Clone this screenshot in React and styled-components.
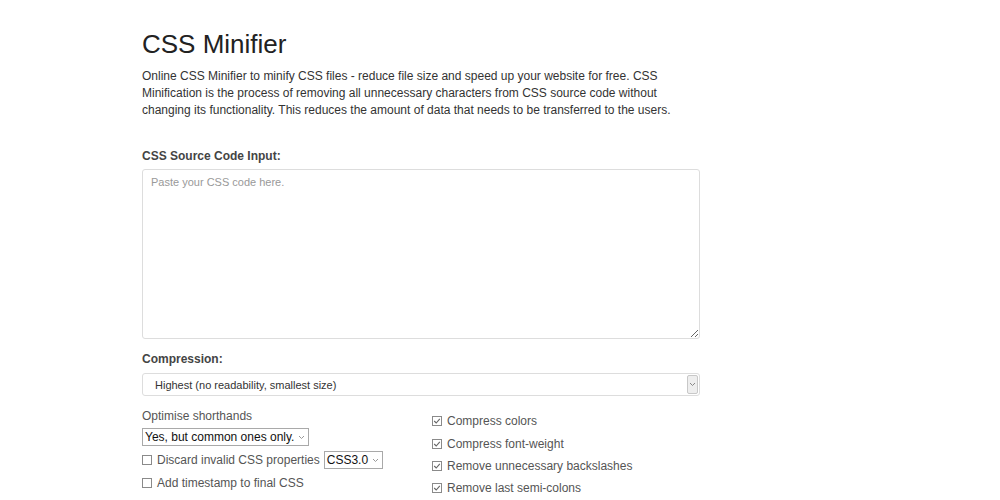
import React from "react";
import styled, { createGlobalStyle } from "styled-components";

const GlobalStyle = createGlobalStyle`
    body {
        margin: 0;
        background-color: #ffffff;
        font-family: "Liberation Sans", Arial, sans-serif;
        color: #333333;
    }
`;

const Page = styled.div`
    width: 558px;
    padding: 28px 0 0 142px;
`;

const Title = styled.h1`
    font-size: 26px;
    font-weight: 400;
    line-height: 32px;
    margin: 0 0 8px 0;
    color: #222222;
`;

const Intro = styled.p`
    width: 540px;
    font-size: 12px;
    line-height: 17px;
    margin: 0 0 29px 0;
    color: #333333;
`;

const FieldLabel = styled.label`
    display: block;
    font-size: 12px;
    font-weight: 700;
    line-height: 17px;
    color: #444444;
    margin-bottom: ${props => props.$gap ?? 4}px;
`;

const CodeArea = styled.textarea`
    display: block;
    box-sizing: border-box;
    width: 558px;
    height: 170px;
    margin: 0 0 12px 0;
    padding: 6px 8px;
    border: 1px solid #dddddd;
    border-radius: 3px;
    font-family: "Liberation Sans", Arial, sans-serif;
    font-size: 11px;
    color: #333333;
    resize: vertical;
    &::placeholder {
        color: #999999;
    }
    &:focus {
        outline: none;
    }
`;

const WideSelect = styled.div`
    box-sizing: border-box;
    width: 558px;
    height: 23px;
    display: flex;
    align-items: center;
    justify-content: space-between;
    padding: 0 1px 0 12px;
    border: 1px solid #dddddd;
    border-radius: 3px;
    font-size: 11px;
    color: #333333;
    margin-bottom: 12px;
`;

const ArrowBox = styled.span`
    width: 11px;
    height: 19px;
    display: flex;
    align-items: center;
    justify-content: center;
    background-color: #eeeeee;
    border: 1px solid #c8c8c8;
    border-radius: 2px;
    box-sizing: border-box;
`;

const Options = styled.div`
    display: grid;
    grid-template-columns: 290px 1fr;
`;

const Column = styled.div`
    display: flex;
    flex-direction: column;
    padding-top: ${props => props.$top || 0}px;
`;

const PlainLabel = styled.div`
    font-size: 12px;
    line-height: 17px;
    color: #555555;
    margin-bottom: 3px;
`;

const SmallSelect = styled.span`
    box-sizing: border-box;
    display: inline-flex;
    align-items: center;
    justify-content: space-between;
    gap: 4px;
    height: 18px;
    padding: 0 3px 0 2px;
    border: 1px solid #a9a9a9;
    font-size: 12px;
    color: #111111;
    white-space: nowrap;
    flex-shrink: 0;
    align-self: ${props => props.$inline ? "auto" : "flex-start"};
    margin-bottom: ${props => props.$inline ? 0 : 3}px;
`;

const Row = styled.div`
    display: flex;
    align-items: center;
    gap: 4px;
    height: 22.4px;
    font-size: 12px;
    color: #555555;
    white-space: nowrap;
`;

const Box = styled.span`
    box-sizing: border-box;
    width: 10px;
    height: 10px;
    margin-right: 1px;
    border: 1px solid #8a8a8a;
    display: inline-flex;
    align-items: center;
    justify-content: center;
    flex-shrink: 0;
`;

const Chevron = ({ color = "#999" }) => (
    <svg width="7" height="5" viewBox="0 0 7 5">
        <path d="M1 1 L3.5 3.5 L6 1" fill="none" stroke={color} strokeWidth="1" />
    </svg>
);

const Check = ({ checked }) => (
    <Box>
        {checked && (
            <svg width="8" height="8" viewBox="0 0 8 8">
                <path d="M1.2 4 L3.2 6 L6.8 1.8" fill="none" stroke="#666" strokeWidth="1.1" />
            </svg>
        )}
    </Box>
);

const rightOptions = [
    "Compress colors",
    "Compress font-weight",
    "Remove unnecessary backslashes",
    "Remove last semi-colons",
];

export default function App() {
    return (
        <>
            <GlobalStyle />
            <Page>
                <Title>CSS Minifier</Title>
                <Intro>
                    Online CSS Minifier to minify CSS files - reduce file size and speed up your website for free. CSS
                    Minification is the process of removing all unnecessary characters from CSS source code without
                    changing its functionality. This reduces the amount of data that needs to be transferred to the users.
                </Intro>

                <FieldLabel>CSS Source Code Input:</FieldLabel>
                <CodeArea placeholder="Paste your CSS code here." />

                <FieldLabel $gap={5}>Compression:</FieldLabel>
                <WideSelect>
                    <span>Highest (no readability, smallest size)</span>
                    <ArrowBox><Chevron color="#888" /></ArrowBox>
                </WideSelect>

                <Options>
                    <Column>
                        <PlainLabel>Optimise shorthands</PlainLabel>
                        <SmallSelect>
                            <span>Yes, but common ones only.</span>
                            <Chevron />
                        </SmallSelect>
                        <Row>
                            <Check />
                            <span>Discard invalid CSS properties</span>
                            <SmallSelect $inline>
                                <span>CSS3.0</span>
                                <Chevron />
                            </SmallSelect>
                        </Row>
                        <Row>
                            <Check />
                            <span>Add timestamp to final CSS</span>
                        </Row>
                    </Column>
                    <Column $top={2}>
                        {rightOptions.map(text => (
                            <Row key={text}>
                                <Check checked />
                                <span>{text}</span>
                            </Row>
                        ))}
                    </Column>
                </Options>
            </Page>
        </>
    );
}
